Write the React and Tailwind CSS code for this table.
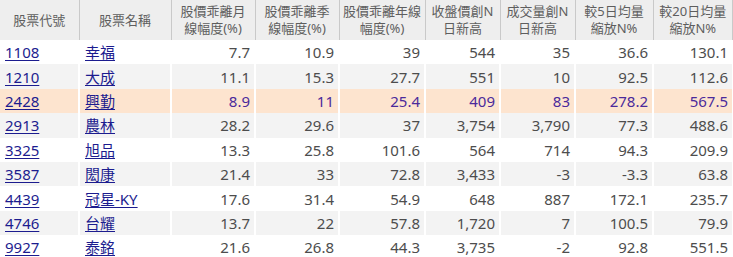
import React from 'react';

const headers = [
  ['股票代號'],
  ['股票名稱'],
  ['股價乖離月', '線幅度(%)'],
  ['股價乖離季', '線幅度(%)'],
  ['股價乖離年線', '幅度(%)'],
  ['收盤價創N', '日新高'],
  ['成交量創N', '日新高'],
  ['較5日均量', '縮放N%'],
  ['較20日均量', '縮放N%'],
];

const widths = ['w-[79px]', 'w-[92px]', 'w-[84px]', 'w-[84px]', 'w-[86px]', 'w-[75px]', 'w-[75px]', 'w-[78px]', 'w-[80px]'];

const rows = [
  ['1108', '幸福', '7.7', '10.9', '39', '544', '35', '36.6', '130.1'],
  ['1210', '大成', '11.1', '15.3', '27.7', '551', '10', '92.5', '112.6'],
  ['2428', '興勤', '8.9', '11', '25.4', '409', '83', '278.2', '567.5'],
  ['2913', '農林', '28.2', '29.6', '37', '3,754', '3,790', '77.3', '488.6'],
  ['3325', '旭品', '13.3', '25.8', '101.6', '564', '714', '94.3', '209.9'],
  ['3587', '閎康', '21.4', '33', '72.8', '3,433', '-3', '-3.3', '63.8'],
  ['4439', '冠星-KY', '17.6', '31.4', '54.9', '648', '887', '172.1', '235.7'],
  ['4746', '台耀', '13.7', '22', '57.8', '1,720', '7', '100.5', '79.9'],
  ['9927', '泰銘', '21.6', '26.8', '44.3', '3,735', '-2', '92.8', '551.5'],
];

export default function App() {
  return (
    <div className="w-[733px] h-[257px] overflow-hidden bg-white" style={{ fontFamily: '"Noto Sans", "Noto Sans CJK TC", sans-serif' }}>
      <table className="w-[733px] border-collapse table-fixed">
        <thead>
          <tr className="h-[40px] bg-[#eeeeee]">
            {headers.map((h, i) => (
              <th
                key={i}
                className={`${widths[i]} p-0 font-normal text-[13px] leading-[17px] text-[#5e5e5e] text-center border-r border-[#c9c9c9] last:border-r-2`}
              >
                {h.map((line, j) => (
                  <div key={j}>{line}</div>
                ))}
              </th>
            ))}
          </tr>
        </thead>
        <tbody>
          {rows.map((r, ri) => {
            const hi = ri === 2;
            const bg = hi ? 'bg-[#fde4cf]' : ri % 2 === 1 ? 'bg-[#f3f3f3]' : 'bg-white';
            return (
              <tr key={ri} className={`h-[24.4px] ${bg}`}>
                {r.map((c, ci) => (
                  <td
                    key={ci}
                    className={`p-0 text-[15px] leading-[20px] border-r-2 border-white whitespace-nowrap ${
                      ci < 2 ? 'pl-[5px] text-left' : 'pr-[4px] text-right'
                    } ${hi ? 'text-[#4b2a9b]' : 'text-[#4d4d4d]'}`}
                  >
                    {ci < 2 ? (
                      <a href="#" className="text-[#1c1c8f] underline underline-offset-2">
                        {c}
                      </a>
                    ) : (
                      c
                    )}
                  </td>
                ))}
              </tr>
            );
          })}
        </tbody>
      </table>
    </div>
  );
}
